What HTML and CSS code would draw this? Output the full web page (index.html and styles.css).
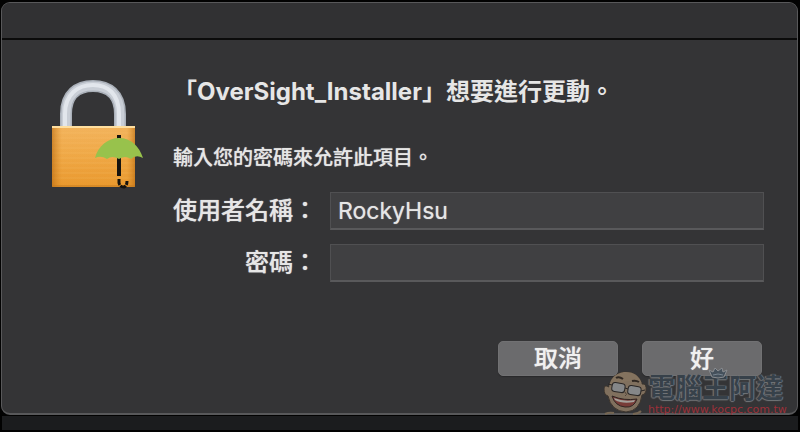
FILE: index.html
```html
<!DOCTYPE html>
<html lang="zh-Hant">
<head>
<meta charset="utf-8">
<meta name="viewport" content="width=device-width, initial-scale=1">
<title>OverSight_Installer</title>
<link rel="stylesheet" href="styles.css">
</head>
<body>
<main class="window">
  <div class="titlebar"></div>
  <form class="dialog">
    <svg class="lock" viewBox="0 0 96 114" aria-hidden="true">
      <defs>
        <linearGradient id="gold" x1="0" y1="0" x2="0" y2="1">
          <stop offset="0" stop-color="#f5b863"/>
          <stop offset="0.45" stop-color="#f2ac4b"/>
          <stop offset="1" stop-color="#eb9a2e"/>
        </linearGradient>
        <linearGradient id="edge" x1="0" y1="0" x2="1" y2="0">
          <stop offset="0" stop-color="#b86b12" stop-opacity="0.65"/>
          <stop offset="0.12" stop-color="#d98a25" stop-opacity="0.1"/>
          <stop offset="0.9" stop-color="#d98a25" stop-opacity="0.1"/>
          <stop offset="1" stop-color="#b86b12" stop-opacity="0.65"/>
        </linearGradient>
      </defs>
      <path d="M15 50V34C15 14 27 6 42 6S69 14 69 34V50" fill="none" stroke="#aab0b9" stroke-width="12"/>
      <path d="M15 50V34C15 14 27 6 42 6S69 14 69 34V50" fill="none" stroke="#c9ced6" stroke-width="9"/>
      <path d="M14 50V34C14 14 27 5 42 5S68 14 68 34V50" fill="none" stroke="#e2e6ec" stroke-width="4"/>
      <rect x="1" y="46" width="83" height="61" rx="1" fill="url(#gold)"/>
      <path d="M1 53H84M1 58H84M1 63H84M1 68H84M1 73H84M1 78H84M1 83H84M1 88H84M1 93H84M1 98H84" stroke="#fbd08a" stroke-opacity="0.2" stroke-width="1"/>
      <rect x="1" y="46" width="83" height="61" rx="1" fill="url(#edge)"/>
      <path d="M1 47H84" stroke="#ffdf9f" stroke-width="2"/>
      <path d="M2 106H84" stroke="#c47a20" stroke-width="1"/>
      <path d="M68 55V60M68 78V96" stroke="#15130f" stroke-width="4"/>
      <path d="M68 99V103Q69 107 73 107Q76 106 76 101" fill="none" stroke="#15130f" stroke-width="3" stroke-dasharray="6 1"/>
      <path d="M44 78C47 66 57 58 68 58C80 58 88 66 92 78Q85 74 80 79Q74 75 68 79Q61 75 56 79Q50 75 44 78Z" fill="#98c24c"/>
    </svg>
    <div class="content">
      <h1 class="heading">「OverSight_Installer」想要進行更動。</h1>
      <p class="message">輸入您的密碼來允許此項目。</p>
      <div class="fields">
        <label class="label" for="username">使用者名稱：</label>
        <input class="field" id="username" type="text" value="RockyHsu" spellcheck="false">
        <label class="label" for="password">密碼：</label>
        <input class="field" id="password" type="password">
      </div>
      <div class="actions">
        <button class="button" type="button">取消</button>
        <button class="button" type="submit">好</button>
      </div>
    </div>
  </form>
</main>
<aside class="watermark">
  <svg class="face" viewBox="0 0 44 44" aria-hidden="true">
    <path d="M5 16Q7 3 20 1Q34 0 38 13Q43 12 42 20Q41 24 38 24Q36 40 22 41Q7 40 4 25Q0 24 0 18Q0 13 5 16Z" fill="#80705e" stroke="#3c342d"/>
    <path d="M5 16Q7 3 20 1Q34 0 38 13Q28 6 5 16Z" fill="#84735f"/>
    <path d="M12 7Q15 5 19 8M28 10Q32 9 35 11" fill="none" stroke="#302822" stroke-width="2"/>
    <g fill="#858789" stroke="#292625" stroke-width="1">
      <rect x="8" y="12" width="13" height="9" rx="3" transform="rotate(9 14 16)"/>
      <rect x="24" y="15" width="13" height="9" rx="3" transform="rotate(9 30 19)"/>
    </g>
    <path d="M21 17L24 18M37 20L41 19M4 13L8 14" stroke="#292625" stroke-width="1"/>
    <path d="M21 21Q24 24 21 25" fill="none" stroke="#50443a"/>
    <path d="M8 25Q20 30 33 28Q30 37 21 36Q11 35 8 25Z" fill="#783c38" stroke="#302522"/>
    <path d="M10 27Q20 31 31 29L30 31Q18 33 11 29Z" fill="#a4a19b"/>
    <path d="M1 43Q5 41 10 42M29 43Q34 43 37 40" fill="none" stroke="#756653" stroke-width="2"/>
  </svg>
  <div class="brand">
    <svg class="crown" viewBox="0 0 20 12" aria-hidden="true">
      <path d="M1 3L5 5L7 1L10 4L14 1L15 5L19 3L16 10Q10 12 4 10Z" fill="#44505b" stroke="#8a8d91"/>
      <path d="M5 8Q10 6 15 8" fill="none" stroke="#778490"/>
    </svg>
    <span class="brand-name">電腦王阿達</span>
    <span class="brand-url">http://www.kocpc.com.tw</span>
  </div>
</aside>
</body>
</html>
```
FILE: styles.css
```css
* {
  box-sizing: border-box;
}

body {
  margin: 0;
  min-height: 100vh;
  padding: 2px 2px 17px 1px;
  position: relative;
  display: flex;
  flex-direction: column;
  background: linear-gradient(#1b1c1e, #1b1c1e) bottom 2px center / calc(100% - 4px) 14px no-repeat, #020202;
  color: #e6e6e6;
  font-family: Inter, "Noto Sans CJK TC", sans-serif;
}

.window {
  flex: 1;
  display: flex;
  flex-direction: column;
  border: 1px solid #58585a;
  border-bottom: 2px solid #58585a;
  border-radius: 9px;
  overflow: hidden;
  background: #343436;
}

.titlebar {
  height: 37px;
  border-bottom: 2px solid #0b0b0b;
  background: #313133;
}

.dialog {
  display: flex;
  gap: 26px;
  padding: 34px 33px 34px 49px;
}

.lock {
  flex: none;
  width: 96px;
  height: 114px;
  margin-top: 6px;
  overflow: visible;
}

.content {
  flex: 1;
  min-width: 0;
}

.heading {
  margin: 0 0 34px;
  font-size: 24px;
  line-height: 36px;
  font-weight: 700;
}

.message {
  margin: 0 0 20px;
  font-size: 20px;
  line-height: 28px;
  font-weight: 500;
  text-shadow: 0 0 1px #b4b4b4;
}

.fields {
  display: grid;
  grid-template-columns: auto 1fr;
  gap: 14px 13px;
  align-items: center;
}

.label {
  text-align: right;
  font-size: 24px;
  line-height: 36px;
  font-weight: 500;
  text-shadow: 0 0 1px #d0d0d0;
}

.field {
  width: 100%;
  min-width: 0;
  height: 38px;
  padding: 0 7px;
  border: 1px solid #505052;
  border-bottom: 2px solid #59595b;
  border-radius: 0;
  outline: none;
  background: #404042;
  color: #e6e6e6;
  font-family: inherit;
  font-size: 23px;
  text-shadow: 0 0 1px #b4b4b4;
}

.actions {
  display: flex;
  justify-content: flex-end;
  gap: 24px;
  margin: 59px 2px 0 0;
}

.button {
  width: 120px;
  height: 35px;
  padding: 0;
  border: 1px solid #717173;
  border-radius: 5px;
  background: #6b6b6d;
  box-shadow: 0 1px 1px #29292b;
  color: #f0f0f0;
  font-family: inherit;
  font-size: 24px;
  line-height: 30px;
  font-weight: 500;
  text-shadow: 0 0 1px #d0d0d0;
}

.watermark {
  position: absolute;
  right: 13px;
  bottom: 17px;
  display: flex;
  align-items: flex-end;
  pointer-events: none;
}

.face {
  width: 44px;
  height: 44px;
}

.brand {
  position: relative;
  display: flex;
  flex-direction: column;
  gap: 1px;
  width: 139px;
}

.crown {
  position: absolute;
  left: 60px;
  top: -8px;
  width: 20px;
  height: 12px;
}

.brand-name {
  color: #37414a;
  font-size: 27px;
  line-height: 28px;
  font-weight: 700;
  white-space: nowrap;
  text-shadow: 1px 0 1px #74777b, -1px 0 1px #74777b, 0 1px 1px #74777b;
}

.brand-url {
  color: #9c3039;
  font-family: "DejaVu Sans", sans-serif;
  font-size: 11px;
  line-height: 11px;
  font-weight: 400;
  white-space: nowrap;
}
```
